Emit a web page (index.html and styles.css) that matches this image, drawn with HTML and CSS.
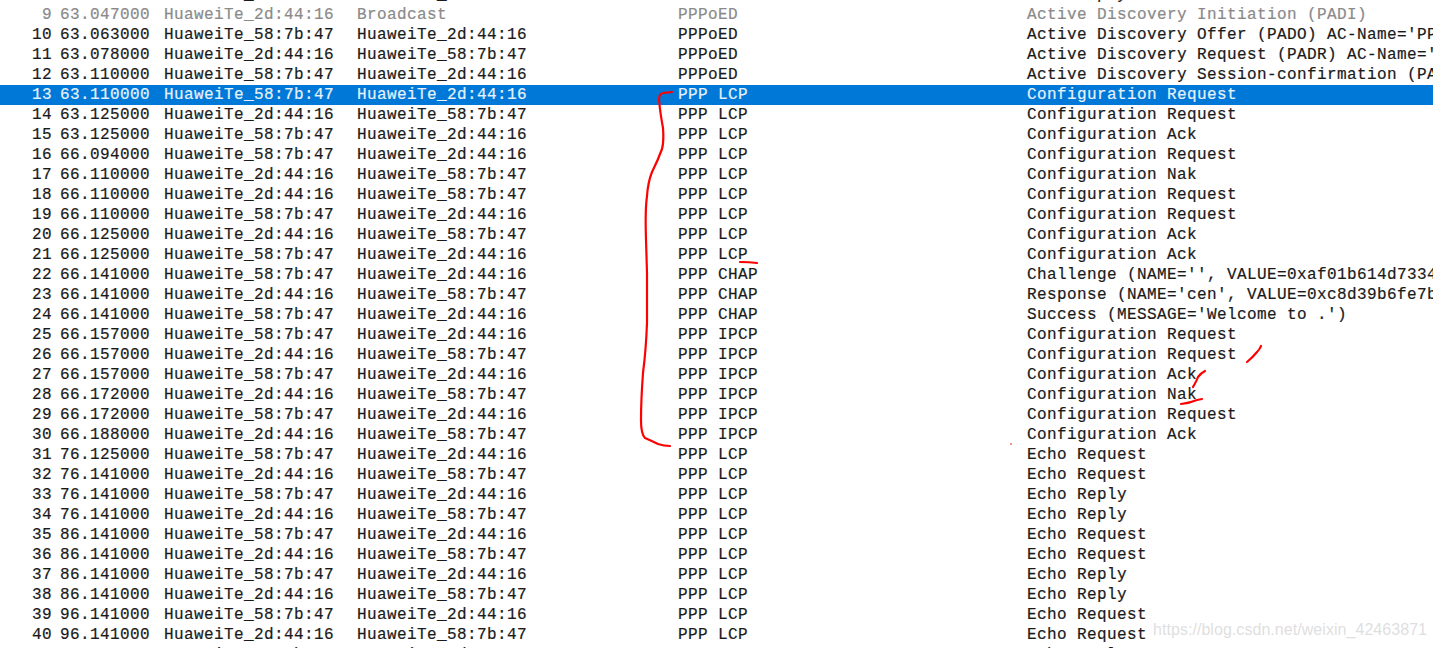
FILE: index.html
```html
<!DOCTYPE html>
<html lang="en">
<head>
<meta charset="utf-8">
<title>Packet list</title>
<link rel="stylesheet" href="styles.css">
</head>
<body>
<main class="list">
<div class="row"><span>8</span><span>60.000000</span><span>HuaweiTe_2d:44:16</span><span>HuaweiTe_58:7b:47</span><span>PPP LCP</span><span>Echo Reply</span></div>
<div class="row dim"><span>9</span><span>63.047000</span><span>HuaweiTe_2d:44:16</span><span>Broadcast</span><span>PPPoED</span><span>Active Discovery Initiation (PADI)</span></div>
<div class="row"><span>10</span><span>63.063000</span><span>HuaweiTe_58:7b:47</span><span>HuaweiTe_2d:44:16</span><span>PPPoED</span><span>Active Discovery Offer (PADO) AC-Name='PPPoE-Server'</span></div>
<div class="row"><span>11</span><span>63.078000</span><span>HuaweiTe_2d:44:16</span><span>HuaweiTe_58:7b:47</span><span>PPPoED</span><span>Active Discovery Request (PADR) AC-Name='PPPoE-Server'</span></div>
<div class="row"><span>12</span><span>63.110000</span><span>HuaweiTe_58:7b:47</span><span>HuaweiTe_2d:44:16</span><span>PPPoED</span><span>Active Discovery Session-confirmation (PADS)</span></div>
<div class="row selected"><span>13</span><span>63.110000</span><span>HuaweiTe_58:7b:47</span><span>HuaweiTe_2d:44:16</span><span>PPP LCP</span><span>Configuration Request</span></div>
<div class="row"><span>14</span><span>63.125000</span><span>HuaweiTe_2d:44:16</span><span>HuaweiTe_58:7b:47</span><span>PPP LCP</span><span>Configuration Request</span></div>
<div class="row"><span>15</span><span>63.125000</span><span>HuaweiTe_58:7b:47</span><span>HuaweiTe_2d:44:16</span><span>PPP LCP</span><span>Configuration Ack</span></div>
<div class="row"><span>16</span><span>66.094000</span><span>HuaweiTe_58:7b:47</span><span>HuaweiTe_2d:44:16</span><span>PPP LCP</span><span>Configuration Request</span></div>
<div class="row"><span>17</span><span>66.110000</span><span>HuaweiTe_2d:44:16</span><span>HuaweiTe_58:7b:47</span><span>PPP LCP</span><span>Configuration Nak</span></div>
<div class="row"><span>18</span><span>66.110000</span><span>HuaweiTe_2d:44:16</span><span>HuaweiTe_58:7b:47</span><span>PPP LCP</span><span>Configuration Request</span></div>
<div class="row"><span>19</span><span>66.110000</span><span>HuaweiTe_58:7b:47</span><span>HuaweiTe_2d:44:16</span><span>PPP LCP</span><span>Configuration Request</span></div>
<div class="row"><span>20</span><span>66.125000</span><span>HuaweiTe_2d:44:16</span><span>HuaweiTe_58:7b:47</span><span>PPP LCP</span><span>Configuration Ack</span></div>
<div class="row"><span>21</span><span>66.125000</span><span>HuaweiTe_58:7b:47</span><span>HuaweiTe_2d:44:16</span><span>PPP LCP</span><span>Configuration Ack</span></div>
<div class="row"><span>22</span><span>66.141000</span><span>HuaweiTe_58:7b:47</span><span>HuaweiTe_2d:44:16</span><span>PPP CHAP</span><span>Challenge (NAME='', VALUE=0xaf01b614d7334c2a)</span></div>
<div class="row"><span>23</span><span>66.141000</span><span>HuaweiTe_2d:44:16</span><span>HuaweiTe_58:7b:47</span><span>PPP CHAP</span><span>Response (NAME='cen', VALUE=0xc8d39b6fe7b41a90)</span></div>
<div class="row"><span>24</span><span>66.141000</span><span>HuaweiTe_58:7b:47</span><span>HuaweiTe_2d:44:16</span><span>PPP CHAP</span><span>Success (MESSAGE='Welcome to .')</span></div>
<div class="row"><span>25</span><span>66.157000</span><span>HuaweiTe_58:7b:47</span><span>HuaweiTe_2d:44:16</span><span>PPP IPCP</span><span>Configuration Request</span></div>
<div class="row"><span>26</span><span>66.157000</span><span>HuaweiTe_2d:44:16</span><span>HuaweiTe_58:7b:47</span><span>PPP IPCP</span><span>Configuration Request</span></div>
<div class="row"><span>27</span><span>66.157000</span><span>HuaweiTe_58:7b:47</span><span>HuaweiTe_2d:44:16</span><span>PPP IPCP</span><span>Configuration Ack</span></div>
<div class="row"><span>28</span><span>66.172000</span><span>HuaweiTe_2d:44:16</span><span>HuaweiTe_58:7b:47</span><span>PPP IPCP</span><span>Configuration Nak</span></div>
<div class="row"><span>29</span><span>66.172000</span><span>HuaweiTe_58:7b:47</span><span>HuaweiTe_2d:44:16</span><span>PPP IPCP</span><span>Configuration Request</span></div>
<div class="row"><span>30</span><span>66.188000</span><span>HuaweiTe_2d:44:16</span><span>HuaweiTe_58:7b:47</span><span>PPP IPCP</span><span>Configuration Ack</span></div>
<div class="row"><span>31</span><span>76.125000</span><span>HuaweiTe_58:7b:47</span><span>HuaweiTe_2d:44:16</span><span>PPP LCP</span><span>Echo Request</span></div>
<div class="row"><span>32</span><span>76.141000</span><span>HuaweiTe_2d:44:16</span><span>HuaweiTe_58:7b:47</span><span>PPP LCP</span><span>Echo Request</span></div>
<div class="row"><span>33</span><span>76.141000</span><span>HuaweiTe_58:7b:47</span><span>HuaweiTe_2d:44:16</span><span>PPP LCP</span><span>Echo Reply</span></div>
<div class="row"><span>34</span><span>76.141000</span><span>HuaweiTe_2d:44:16</span><span>HuaweiTe_58:7b:47</span><span>PPP LCP</span><span>Echo Reply</span></div>
<div class="row"><span>35</span><span>86.141000</span><span>HuaweiTe_58:7b:47</span><span>HuaweiTe_2d:44:16</span><span>PPP LCP</span><span>Echo Request</span></div>
<div class="row"><span>36</span><span>86.141000</span><span>HuaweiTe_2d:44:16</span><span>HuaweiTe_58:7b:47</span><span>PPP LCP</span><span>Echo Request</span></div>
<div class="row"><span>37</span><span>86.141000</span><span>HuaweiTe_58:7b:47</span><span>HuaweiTe_2d:44:16</span><span>PPP LCP</span><span>Echo Reply</span></div>
<div class="row"><span>38</span><span>86.141000</span><span>HuaweiTe_2d:44:16</span><span>HuaweiTe_58:7b:47</span><span>PPP LCP</span><span>Echo Reply</span></div>
<div class="row"><span>39</span><span>96.141000</span><span>HuaweiTe_58:7b:47</span><span>HuaweiTe_2d:44:16</span><span>PPP LCP</span><span>Echo Request</span></div>
<div class="row"><span>40</span><span>96.141000</span><span>HuaweiTe_2d:44:16</span><span>HuaweiTe_58:7b:47</span><span>PPP LCP</span><span>Echo Request</span></div>
<div class="row"><span>41</span><span>96.141000</span><span>HuaweiTe_58:7b:47</span><span>HuaweiTe_2d:44:16</span><span>PPP LCP</span><span>Echo Reply</span></div>
</main>
<svg class="ink" width="1433" height="648" viewBox="0 0 1433 648" aria-hidden="true">
<path d="M672 92 L663 93 Q659 94 659 99 Q660 112 663 128 Q664 142 662 149 Q658 160 652 172 Q648 182 647 196 Q645 210 646 240 L647 273 L647 323 Q646 350 643 373 Q641 400 641 420 Q641 434 645 438 Q652 441 658 444 Q664 446 670 446"/>
<path d="M740 262 Q750 262 757 263"/>
<path d="M1247 362 Q1252 358 1257 352 Q1260 349 1261 346"/>
<path d="M1193 387 Q1197 380 1198 377 Q1201 373 1205 371"/>
<path d="M1181 404 Q1190 403 1197 400 L1202 399"/>
<path class="dot" d="M1010.5 444 h1"/>
</svg>
<div class="mark">https://blog.csdn.net/weixin_42463871</div>
</body>
</html>
```
FILE: styles.css
```css
html, body {
  margin: 0;
  height: 648px;
  overflow: hidden;
  background: #fff;
}
.list {
  margin-top: -15px;
  font-family: "Liberation Mono", monospace;
  font-size: 16px;
  letter-spacing: 0.4px;
  color: #1a1a1a;
  -webkit-text-stroke: 0.2px currentColor;
}
.row {
  display: grid;
  grid-template-columns: 52px 104px 193px 321px 349px 1fr;
  height: 20px;
  line-height: 20px;
  white-space: nowrap;
  overflow: hidden;
}
.row span {
  display: block;
  padding-left: 8px;
  overflow: hidden;
}
.row span:first-child {
  padding-left: 0;
  text-align: right;
}
.row span:last-child {
  overflow: visible;
}
.dim {
  color: #8a8a8a;
}
.selected {
  background: #0078d7;
  color: #e6f2fb;
}
.ink {
  position: absolute;
  left: 0;
  top: 0;
  fill: none;
  stroke: #f00;
  stroke-width: 2.2;
  stroke-linecap: round;
  stroke-linejoin: round;
}
.ink .dot {
  stroke-width: 1;
}
.mark {
  position: absolute;
  left: 1153px;
  top: 620px;
  font-family: "Liberation Sans", Arial, sans-serif;
  font-size: 16px;
  letter-spacing: 0.05px;
  line-height: 20px;
  color: rgba(190, 190, 190, 0.5);
  white-space: nowrap;
}
```
